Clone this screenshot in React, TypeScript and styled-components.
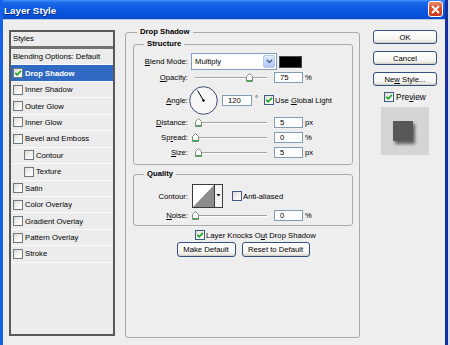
import React from 'react';
import styled, { createGlobalStyle } from 'styled-components';

const GlobalStyle = createGlobalStyle`
  html, body {
    margin: 0;
    padding: 0;
    background: #d9dde6;
  }
  body {
    font-family: "Liberation Sans", Arial, sans-serif;
    font-size: 7.7px;
    color: #000;
  }
  u { text-decoration-thickness: 1px; text-underline-offset: 1px; }
`;

const styleRows = [
  { name: 'Drop Shadow', checked: true, active: true },
  { name: 'Inner Shadow' },
  { name: 'Outer Glow' },
  { name: 'Inner Glow' },
  { name: 'Bevel and Emboss' },
  { name: 'Contour', sub: true },
  { name: 'Texture', sub: true },
  { name: 'Satin' },
  { name: 'Color Overlay' },
  { name: 'Gradient Overlay' },
  { name: 'Pattern Overlay' },
  { name: 'Stroke' },
];

const Check = ({ checked, muted }: { checked?: boolean; muted?: boolean }) => (
  <CheckBox $muted={muted}>
    {checked && (
      <svg width="8" height="8" viewBox="0 0 8 8">
        <path d="M1.2 3.8 L3.2 5.8 L6.9 1.8" fill="none" stroke="#22a322" strokeWidth="1.7" />
      </svg>
    )}
  </CheckBox>
);

const Slider = ({ pos }: { pos: number }) => (
  <SliderWrap>
    <Track />
    <Thumb style={{ left: 4 + pos * 72 - 3.5 }}>
      <svg width="7" height="9" viewBox="0 0 7 9">
        <path d="M0.5 3.5 L3.5 0.5 L6.5 3.5 L6.5 8.5 L0.5 8.5 Z" fill="#fbfbfb" stroke="#7c8a7c" />
        <path d="M1 7.5 H6" stroke="#38b048" />
      </svg>
    </Thumb>
  </SliderWrap>
);

const SliderRow = ({ label, pos, value, unit }: { label: React.ReactNode; pos: number; value: string; unit: string }) => (
  <Row $h={15}>
    <Label>{label}</Label>
    <Slider pos={pos} />
    <NumBox>{value}</NumBox>
    <Unit>{unit}</Unit>
  </Row>
);

export default function App() {
  return (
    <>
      <GlobalStyle />
      <Window>
        <TitleBar>
          <Title>Layer Style</Title>
          <CloseBtn>
            <svg width="9" height="9" viewBox="0 0 9 9">
              <path d="M1 1 L8 8 M8 1 L1 8" stroke="#fff" strokeWidth="1.8" />
            </svg>
          </CloseBtn>
        </TitleBar>

        <Body>
          <StylesList>
            <ListHeader>Styles</ListHeader>
            <ListRow>Blending Options: Default</ListRow>
            {styleRows.map((r) => (
              <ListRow key={r.name} $active={r.active} $sub={r.sub}>
                <Check checked={r.checked} muted />
                <RowText>{r.name}</RowText>
              </ListRow>
            ))}
          </StylesList>

          <MainGroup>
            <Legend>Drop Shadow</Legend>

            <SubGroup>
              <SubLegend>Structure</SubLegend>
              <Row $h={17}>
                <Label><u>B</u>lend Mode:</Label>
                <Select>
                  <SelectText>Multiply</SelectText>
                  <SelectButton>
                    <svg width="7" height="5" viewBox="0 0 7 5">
                      <path d="M0.8 0.8 L3.5 3.6 L6.2 0.8" fill="none" stroke="#4a5f8c" strokeWidth="1.4" />
                    </svg>
                  </SelectButton>
                </Select>
                <Swatch />
              </Row>
              <SliderRow label={<><u>O</u>pacity:</>} pos={0.75} value="75" unit="%" />
              <Row $h={30}>
                <Label><u>A</u>ngle:</Label>
                <Dial width="29" height="29" viewBox="0 0 29 29">
                  <circle cx="14.5" cy="14.5" r="13.8" fill="#f6f6f6" stroke="#3d4c6c" strokeWidth="1" />
                  <line x1="14.5" y1="14.5" x2="8.5" y2="4.5" stroke="#000" strokeWidth="1" />
                  <circle cx="14.5" cy="14.5" r="1.2" fill="#000" />
                </Dial>
                <AngleBox>120</AngleBox>
                <Degree>°</Degree>
                <Check checked />
                <CheckText>Use <u>G</u>lobal Light</CheckText>
              </Row>
              <SliderRow label={<><u>D</u>istance:</>} pos={0.05} value="5" unit="px" />
              <SliderRow label={<>Sp<u>r</u>ead:</>} pos={0} value="0" unit="%" />
              <SliderRow label={<><u>S</u>ize:</>} pos={0.05} value="5" unit="px" />
            </SubGroup>

            <QualityGroup>
              <SubLegend>Quality</SubLegend>
              <Row $h={24}>
                <Label>Contour:</Label>
                <ContourPicker width="31" height="24" viewBox="0 0 31 24">
                  <rect x="0.5" y="0.5" width="30" height="23" fill="#fff" stroke="#3a3a3a" />
                  <path d="M1 23 L22 1 L22 23 Z" fill="#8c8c8c" />
                  <line x1="22.5" y1="0.5" x2="22.5" y2="23.5" stroke="#3a3a3a" />
                  <rect x="23" y="1" width="7" height="22" fill="#f2f2f2" />
                  <path d="M24.5 10 L28.5 10 L26.5 12.5 Z" fill="#000" />
                </ContourPicker>
                <AntiAlias>
                  <Check />
                  <CheckText>Anti-aliased</CheckText>
                </AntiAlias>
              </Row>
              <SliderRow label={<><u>N</u>oise:</>} pos={0} value="0" unit="%" />
            </QualityGroup>

            <KnockRow>
              <Check checked />
              <CheckText>Layer Knocks O<u>u</u>t Drop Shadow</CheckText>
            </KnockRow>
            <ButtonRow>
              <Button $w={59} $h={15}>Make Default</Button>
              <Button $w={68} $h={15}>Reset to Default</Button>
            </ButtonRow>
          </MainGroup>

          <SideColumn>
            <Button $w={64} $h={14} $top={10}>OK</Button>
            <Button $w={64} $h={14} $top={7}>Cancel</Button>
            <Button $w={64} $h={14} $top={7}>Ne<u>w</u> Style...</Button>
            <PreviewRow>
              <Check checked />
              <PreviewText>Pre<u>v</u>iew</PreviewText>
            </PreviewRow>
            <PreviewBox>
              <PreviewSquare />
            </PreviewBox>
          </SideColumn>
        </Body>
      </Window>
    </>
  );
}

const Window = styled.div`
  width: 448px;
  height: 345px;
  box-sizing: border-box;
  overflow: hidden;
  background: #eeeeee;
  border-left: 3px solid #1862ea;
  border-right: 3px solid #1230a4;
`;

const TitleBar = styled.div`
  height: 20px;
  display: flex;
  align-items: center;
  justify-content: space-between;
  padding: 0 2px 0 1px;
  background: linear-gradient(180deg, #3f8ff9 0%, #1b69ea 14%, #0b5ae2 45%, #0752da 80%, #0a4bcc 100%);
  border-bottom: 1px solid #b9c8e8;
  box-sizing: border-box;
`;

const Title = styled.span`
  font-weight: bold;
  font-size: 9.8px;
  color: #fff;
  text-shadow: 1px 1px 0 #0b2a8a;
  padding-top: 1px;
`;

const CloseBtn = styled.div`
  width: 15px;
  height: 16px;
  align-self: flex-start;
  margin-top: 1px;
  box-sizing: border-box;
  border: 1px solid #fff;
  border-radius: 3px;
  background: linear-gradient(180deg, #e98a6c 0%, #dc5432 40%, #c8391b 100%);
  display: flex;
  align-items: center;
  justify-content: center;
`;

const Body = styled.div`
  display: flex;
  align-items: flex-start;
  padding-left: 6px;
`;

const StylesList = styled.div`
  width: 106px;
  height: 306px;
  margin-top: 10px;
  flex: none;
  box-sizing: border-box;
  border: 2px solid #585858;
  background: #ececec;
`;

const ListHeader = styled.div`
  height: 14px;
  line-height: 13px;
  padding-left: 2px;
  border-bottom: 3px solid #727272;
`;

const ListRow = styled.div<{ $active?: boolean; $sub?: boolean }>`
  height: 16.45px;
  box-sizing: border-box;
  display: flex;
  align-items: center;
  padding-left: ${(p) => (p.$sub ? 13 : 2)}px;
  border-bottom: 1px solid #fbfbfb;
  background: ${(p) => (p.$active ? '#316ac5' : 'transparent')};
  color: ${(p) => (p.$active ? '#fff' : '#000')};
  font-weight: ${(p) => (p.$active ? 'bold' : 'normal')};
  white-space: nowrap;
`;

const RowText = styled.span`
  margin-left: 2px;
`;

const CheckBox = styled.span<{ $muted?: boolean }>`
  width: 10px;
  height: 10px;
  flex: none;
  box-sizing: border-box;
  border: 1px solid ${(p) => (p.$muted ? '#6f7780' : '#3d5b84')};
  background: linear-gradient(135deg, #dcdcd6 0%, #f6f6f4 60%, #ffffff 100%);
  display: flex;
  align-items: center;
  justify-content: center;
`;

const MainGroup = styled.fieldset`
  margin: 7px 0 0 10px;
  width: 235px;
  height: 311px;
  flex: none;
  box-sizing: border-box;
  border: 1px solid #aaaaaa;
  border-radius: 3px;
  padding: 2px 6px 0 7px;
`;

const Legend = styled.legend`
  font-weight: bold;
  line-height: 10px;
  padding: 0 3px;
  margin-left: 4px;
`;

const SubGroup = styled.fieldset`
  margin: 0;
  width: 220px;
  box-sizing: border-box;
  border: 1px solid #aaaaaa;
  border-radius: 3px;
  padding: 4px 0 4px 0;
`;

const QualityGroup = styled(SubGroup)`
  margin-top: 4px;
  padding: 5px 0 2px 0;
`;

const SubLegend = styled.legend`
  font-weight: bold;
  line-height: 10px;
  padding: 0 3px;
  margin-left: 10px;
`;

const Row = styled.div<{ $h: number }>`
  display: flex;
  align-items: center;
  height: ${(p) => p.$h}px;
  white-space: nowrap;
`;

const Label = styled.span`
  width: 55px;
  flex: none;
  box-sizing: border-box;
  text-align: right;
  padding-right: 1px;
  margin-right: 2px;
`;

const Select = styled.div`
  width: 86px;
  height: 17px;
  box-sizing: border-box;
  border: 1px solid #7f9db9;
  background: #fff;
  display: flex;
  align-items: center;
  justify-content: space-between;
  padding: 1px;
`;

const SelectText = styled.span`
  padding-left: 2px;
`;

const SelectButton = styled.span`
  width: 12px;
  height: 13px;
  box-sizing: border-box;
  border: 1px solid #b6c8f0;
  border-radius: 2px;
  background: linear-gradient(180deg, #e0e9fe 0%, #c3d4fb 60%, #b3c7f6 100%);
  display: flex;
  align-items: center;
  justify-content: center;
`;

const Swatch = styled.span`
  width: 23px;
  height: 12px;
  margin-left: 2px;
  box-sizing: border-box;
  border: 1px solid #4a4a4a;
  background: #000;
`;

const SliderWrap = styled.div`
  position: relative;
  width: 80px;
  height: 11px;
  flex: none;
`;

const Track = styled.div`
  position: absolute;
  left: 4px;
  right: 4px;
  top: 5px;
  height: 0;
  border-top: 1px solid #a2a2a2;
  border-bottom: 1px solid #ffffff;
`;

const Thumb = styled.div`
  position: absolute;
  top: 1px;
  width: 7px;
  height: 9px;
  line-height: 0;
`;

const NumBox = styled.span`
  width: 29px;
  height: 11px;
  margin-left: 3px;
  box-sizing: border-box;
  border: 1px solid #7f9db9;
  background: #fff;
  padding-left: 5px;
  line-height: 9px;
`;

const AngleBox = styled(NumBox)`
  width: 30px;
  margin-left: 4px;
`;

const Unit = styled.span`
  margin-left: 2px;
`;

const Degree = styled.span`
  align-self: flex-start;
  margin: 9px 6px 0 3px;
`;

const Dial = styled.svg`
  margin-left: -2px;
  flex: none;
`;

const CheckText = styled.span`
  margin-left: 1px;
`;

const ContourPicker = styled.svg`
  margin-left: 1px;
  flex: none;
`;

const AntiAlias = styled.span`
  display: flex;
  align-items: center;
  margin-left: 9px;
`;

const KnockRow = styled.div`
  display: flex;
  align-items: center;
  height: 10px;
  margin: 4px 0 0 62px;
  white-space: nowrap;
`;

const ButtonRow = styled.div`
  display: flex;
  justify-content: center;
  gap: 6px;
  margin-top: 2px;
`;

const Button = styled.button<{ $w: number; $h: number; $top?: number }>`
  width: ${(p) => p.$w}px;
  height: ${(p) => p.$h}px;
  margin-top: ${(p) => p.$top ?? 0}px;
  padding: 0;
  box-sizing: border-box;
  border: 1px solid #34507e;
  border-radius: 3px;
  background: linear-gradient(180deg, #ffffff 0%, #f5f5f1 70%, #dedcd4 100%);
  box-shadow: inset 0 -1px 0 #d2d0c8;
  font-family: "Liberation Sans", Arial, sans-serif;
  font-size: 7.7px;
  color: #000;
  white-space: nowrap;
  flex: none;
`;

const SideColumn = styled.div`
  margin-left: 13px;
  width: 64px;
  display: flex;
  flex-direction: column;
  align-items: center;
`;

const PreviewRow = styled.div`
  display: flex;
  align-items: center;
  height: 12px;
  margin-top: 5px;
`;

const PreviewText = styled.span`
  margin-left: 2px;
  font-size: 8.4px;
`;

const PreviewBox = styled.div`
  width: 48px;
  height: 48px;
  margin-top: 4px;
  background: #d5d5d5;
  box-sizing: border-box;
  padding: 14px 0 0 12px;
`;

const PreviewSquare = styled.div`
  width: 20px;
  height: 20px;
  background: #585858;
  box-shadow: 2px 3px 3px rgba(0, 0, 0, 0.55);
`;
